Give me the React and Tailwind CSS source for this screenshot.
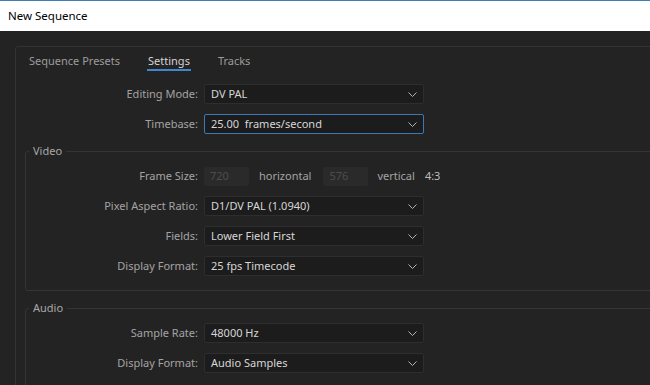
import React from 'react';

const Chevron = () => (
    <svg width="9" height="5" viewBox="0 0 9 5" className="shrink-0">
        <path d="M0.5 0.5 L4.5 4.5 L8.5 0.5" fill="none" stroke="#b4b4b4" strokeWidth="1" />
    </svg>
);

const Dropdown = ({ value, focused }) => (
    <div
        className={`flex h-[20px] w-[220px] items-center justify-between rounded-[2px] border bg-[#1c1c1c] pl-[6px] pr-[6px] ${
            focused ? 'border-[#3d79b8]' : 'border-[#2e2e2e]'
        }`}
    >
        <span className="whitespace-pre text-[#d6d6d6]">{value}</span>
        <Chevron />
    </div>
);

const Row = ({ label, labelWidth, children }) => (
    <div className="flex h-[20px] items-center gap-[6px]">
        <div className="shrink-0 text-right text-[#a3a3a3]" style={{ width: labelWidth }}>
            {label}
        </div>
        {children}
    </div>
);

const DisabledBox = ({ value }) => (
    <div className="flex h-[19px] w-[45px] items-center rounded-[2px] bg-[#2a2a2a] pl-[6px] text-[#4d4d4d]">
        {value}
    </div>
);

const Group = ({ title, children, className }) => (
    <fieldset className={`ml-[9px] w-[700px] rounded-tl-[3px] rounded-bl-[3px] border border-[#353535] ${className}`}>
        <legend className="ml-[3px] px-[4px] leading-[16px] text-[#a8a8a8]">{title}</legend>
        <div className="flex flex-col gap-[10px] pt-[7px]">{children}</div>
    </fieldset>
);

export default function App() {
    const tabs = ['Sequence Presets', 'Settings', 'Tracks'];

    return (
        <div
            className="h-[385px] w-[650px] overflow-hidden bg-[#232323] text-[11px]"
            style={{ fontFamily: '"Noto Sans", "Open Sans", sans-serif' }}
        >
            {/* title bar */}
            <div className="flex h-[31px] items-center border-t border-[#3f7fb3] bg-white pl-[8px] text-[11.5px] text-black">
                New Sequence
            </div>

            {/* main panel */}
            <div className="ml-[15px] mt-[15px] h-[400px] w-[700px] rounded-tl-[3px] border border-[#333333]">
                <div className="flex gap-[26px] pl-[12px]">
                    {tabs.map((tab) => (
                        <div
                            key={tab}
                            className={`border-b-2 px-[1px] pt-[6px] leading-[16px] ${
                                tab === 'Settings'
                                    ? 'border-[#3f86cf] text-[#d4d4d4]'
                                    : 'border-transparent text-[#9c9c9c]'
                            }`}
                        >
                            {tab}
                        </div>
                    ))}
                </div>

                <div className="mt-[13px] flex flex-col gap-[10px]">
                    <Row label="Editing Mode:" labelWidth={182}>
                        <Dropdown value="DV PAL" />
                    </Row>
                    <Row label="Timebase:" labelWidth={182}>
                        <Dropdown value="25.00  frames/second" focused />
                    </Row>
                </div>

                <Group title="Video" className="mt-[9px] pb-[14px]">
                    <Row label="Frame Size:" labelWidth={172}>
                        <DisabledBox value="720" />
                        <span className="ml-[4px] text-[#a3a3a3]">horizontal</span>
                        <span className="ml-[6px]">
                            <DisabledBox value="576" />
                        </span>
                        <span className="ml-[3px] text-[#a3a3a3]">vertical</span>
                        <span className="ml-[4px] text-[#bdbdbd]">4:3</span>
                    </Row>
                    <Row label="Pixel Aspect Ratio:" labelWidth={172}>
                        <Dropdown value="D1/DV PAL (1.0940)" />
                    </Row>
                    <Row label="Fields:" labelWidth={172}>
                        <Dropdown value="Lower Field First" />
                    </Row>
                    <Row label="Display Format:" labelWidth={172}>
                        <Dropdown value="25 fps Timecode" />
                    </Row>
                </Group>

                <Group title="Audio" className="mt-[9px] h-[200px]">
                    <Row label="Sample Rate:" labelWidth={172}>
                        <Dropdown value="48000 Hz" />
                    </Row>
                    <Row label="Display Format:" labelWidth={172}>
                        <Dropdown value="Audio Samples" />
                    </Row>
                </Group>
            </div>
        </div>
    );
}
